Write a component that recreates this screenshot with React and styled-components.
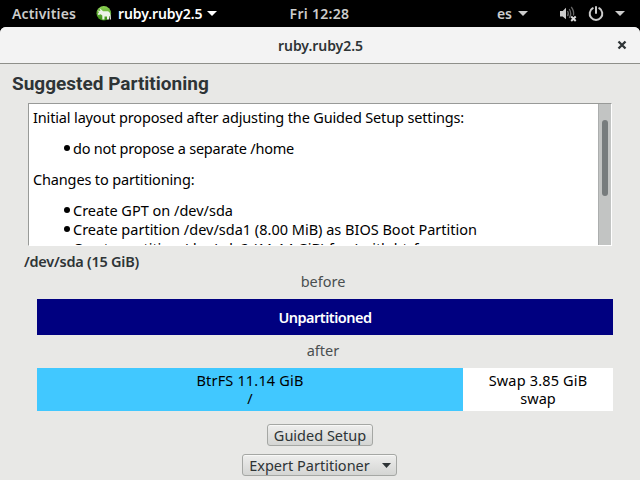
import React from "react";
import styled, { createGlobalStyle } from "styled-components";

const GlobalStyle = createGlobalStyle`
  * { box-sizing: border-box; }
  body { margin: 0; background: #000; overflow: hidden; }
`;

const Desktop = styled.div`
  width: 640px;
  height: 480px;
  display: flex;
  flex-direction: column;
  overflow: hidden;
  background: #000;
  color: #2e3436;
  font: 14.5px/20px "Noto Sans", sans-serif;
  white-space: nowrap;
`;

const Text = styled.span`
  display: block;
  letter-spacing: ${(p) => p.$track || 0}px;
  font-weight: ${(p) => p.$weight || 400};
`;

const TopBar = styled.header`
  height: 27px;
  flex: none;
  display: grid;
  grid-template-columns: 1fr auto 1fr;
  align-items: center;
  padding: 0 15px 0 12px;
  color: #ccc;
  font-size: 14px;
`;

const BarGroup = styled.div`
  display: flex;
  align-items: center;
  justify-content: ${(p) => (p.$end ? "flex-end" : "flex-start")};
`;

const AppMenu = styled.div`
  display: flex;
  align-items: center;
  margin-left: 20px;
  color: #fff;
`;

const AppName = styled(Text)`
  margin: 0 5px 0 6px;
`;

const Clock = styled(Text)`
  margin-left: 2px;
`;

const Language = styled(Text)`
  margin-right: 6px;
`;

const StatusIcons = styled.div`
  display: flex;
  align-items: center;
  margin-left: 31px;
  gap: 11px;
`;

const Window = styled.main`
  flex: 1;
  display: flex;
  flex-direction: column;
  min-height: 0;
  border-radius: 6px 6px 0 0;
  background: #e8e8e6;
  overflow: hidden;
`;

const TitleBar = styled.div`
  height: 37px;
  flex: none;
  display: grid;
  grid-template-columns: 1fr auto 1fr;
  align-items: center;
  background: #f3f3f3;
  border-bottom: 1px solid #8e8f8a;
  font-size: 14px;
`;

const CloseButton = styled.button`
  grid-column: 3;
  justify-self: end;
  display: flex;
  margin-right: 13px;
  padding: 0;
  border: 0;
  background: none;
`;

const Title = styled(Text)`
  grid-column: 2;
  padding: 1px 0 0 1px;
`;

const Heading = styled.h1`
  margin: 9px 0 0 12px;
  height: 30px;
  font: 700 19px/22px Roboto, sans-serif;
`;

const Summary = styled.section`
  display: flex;
  flex: none;
  width: 584px;
  height: 143px;
  margin-left: 28px;
  border: 1px solid #fff;
  border-top-color: #989a98;
  border-left-color: #989a98;
  background: #fff;
  color: #000;
  overflow: hidden;
`;

const SummaryText = styled.div`
  flex: 1;
  min-width: 0;
  padding: 4px 4px 0;
  line-height: 19px;
`;

const List = styled.ul`
  margin: 12px 0;
  padding: 0 0 0 31px;
  list-style: none;
`;

const Item = styled.li`
  display: flex;
  align-items: center;
  gap: 3px;
  &::before {
    content: "";
    width: 6px;
    height: 6px;
    border-radius: 3px;
    background: #000;
    margin-bottom: 1px;
  }
`;

const ScrollTrack = styled.div`
  width: 13px;
  padding: 16px 3px 0;
  border-left: 1px solid #acaeae;
  background: #c2c4c3;
`;

const ScrollThumb = styled.div`
  width: 6px;
  height: 76px;
  border-radius: 3px;
  background: #777c7d;
`;

const DeviceName = styled(Text)`
  margin: 5px 0 0 24px;
`;

const Disk = styled.div`
  display: flex;
  flex-direction: column;
  width: 576px;
  margin-left: 37px;
`;

const StateLabel = styled.div`
  height: ${(p) => p.$height}px;
  padding-top: ${(p) => p.$top}px;
  display: flex;
  justify-content: center;
  padding-right: 4px;
  color: #4a4f50;
`;

const DiskBar = styled.div`
  display: flex;
  height: ${(p) => p.$height}px;
`;

const Partition = styled.div`
  width: ${(p) => p.$width}px;
  padding-bottom: 1px;
  display: flex;
  flex-direction: column;
  align-items: center;
  justify-content: center;
  line-height: 18px;
  background: ${(p) => p.$fill};
  color: ${(p) => p.$color || "#000"};
`;

const Actions = styled.div`
  display: flex;
  flex-direction: column;
  align-items: center;
  gap: 8px;
  padding-top: 13px;
`;

const Button = styled.button`
  display: flex;
  align-items: center;
  justify-content: center;
  gap: 12px;
  width: ${(p) => p.$width}px;
  height: 22px;
  padding: 0 0 0 ${(p) => p.$inset || 0}px;
  border: 1px solid #a5a7a4;
  border-radius: 3px;
  background: linear-gradient(#eeeeed, #d4d5d3);
  box-shadow: inset 0 1px #f8f8f7;
  color: #2e3436;
  font: inherit;
`;

const MenuButton = styled(Button)`
  margin-right: 1px;
`;

const Caret = ({ color = "currentColor", width = 10, height = 5 }) => (
  <svg width={width} height={height} viewBox="0 0 10 5" preserveAspectRatio="none">
    <path d="M0 0H10L5 5Z" fill={color} />
  </svg>
);

const YastIcon = () => (
  <svg width="16" height="16" viewBox="0 0 16 16">
    <defs>
      <linearGradient id="leaf" x2="0" y2="1">
        <stop stopColor="#8ed355" />
        <stop offset="1" stopColor="#368b12" />
      </linearGradient>
    </defs>
    <circle cx="7.8" cy="7.3" r="7.3" fill="url(#leaf)" />
    <path d="M1 3.2L3 5.3L4.5 4.5L3.5 2L6 4.2L7 5.3H12Q14.8 5.8 15 13.5H13.7V10.2L13 10V13.5H11V10.5H8.5V13.5H6.3V9.5L4.7 8.2L2.5 9L1.6 8L3 6.5Z" fill="#eef3e9" />
  </svg>
);

const MutedIcon = () => (
  <svg width="18" height="16" viewBox="0 0 18 16">
    <path d="M1 5H3.7L7 1.7V13.3L3.7 10.5H1Z" fill="#ccc" />
    <g fill="none" stroke="#666" strokeWidth="1.3">
      <path d="M8.5 5Q10.2 7.5 8.5 10.2" />
      <path d="M10.3 3Q13.2 7.5 10.3 12" />
      <path d="M12.2 1Q15.2 4.5 14.5 9.5" />
    </g>
    <path d="M12.2 10.5L16.7 15M16.7 10.5L12.2 15" stroke="#ddd" strokeWidth="1.9" />
  </svg>
);

const PowerIcon = () => (
  <svg width="16" height="16" viewBox="0 0 16 16" fill="none" stroke="#ccc" strokeWidth="2" strokeLinecap="round">
    <path d="M4.8 2.2A6.3 6.3 0 1 0 11.2 2.2M8 1V7" />
  </svg>
);

export default function App() {
  return (
    <Desktop>
      <GlobalStyle />
      <TopBar>
        <BarGroup>
          <Text $weight={600} $track={0.16}>Activities</Text>
          <AppMenu>
            <YastIcon />
            <AppName $weight={600} $track={-0.1}>ruby.ruby2.5</AppName>
            <Caret />
          </AppMenu>
        </BarGroup>
        <Clock $weight={600} $track={0.3}>Fri 12:28</Clock>
        <BarGroup $end>
          <Language $weight={600}>es</Language>
          <Caret />
          <StatusIcons>
            <MutedIcon />
            <PowerIcon />
            <Caret />
          </StatusIcons>
        </BarGroup>
      </TopBar>
      <Window>
        <TitleBar>
          <Title $weight={600} $track={-0.05}>ruby.ruby2.5</Title>
          <CloseButton aria-label="Close">
            <svg width="10" height="10" viewBox="0 0 10 10">
              <path d="M1.5 1.5L8.5 8.5M8.5 1.5L1.5 8.5" stroke="#2e3436" strokeWidth="2.3" />
            </svg>
          </CloseButton>
        </TitleBar>
        <Heading>Suggested Partitioning</Heading>
        <Summary>
          <SummaryText>
            <Text $track={-0.15}>Initial layout proposed after adjusting the Guided Setup settings:</Text>
            <List>
              <Item><Text $track={-0.23}>do not propose a separate /home</Text></Item>
            </List>
            <Text $track={-0.15}>Changes to partitioning:</Text>
            <List>
              <Item><Text>Create GPT on /dev/sda</Text></Item>
              <Item><Text>Create partition /dev/sda1 (8.00 MiB) as BIOS Boot Partition</Text></Item>
              <Item><Text $track={-0.08}>Create partition /dev/sda2 (11.14 GiB) for / with btrfs</Text></Item>
            </List>
          </SummaryText>
          <ScrollTrack><ScrollThumb /></ScrollTrack>
        </Summary>
        <DeviceName $weight={600} $track={-0.25}>/dev/sda (15 GiB)</DeviceName>
        <Disk>
          <StateLabel $height={28} $top={0}><Text>before</Text></StateLabel>
          <DiskBar $height={36}>
            <Partition $width={576} $fill="#000080" $color="#fff">
              <Text $weight={600} $track={-0.5}>Unpartitioned</Text>
            </Partition>
          </DiskBar>
          <StateLabel $height={33} $top={5}><Text>after</Text></StateLabel>
          <DiskBar $height={43}>
            <Partition $width={426} $fill="#41c8ff">
              <Text $track={0.17}>BtrFS 11.14 GiB</Text>
              <Text>/</Text>
            </Partition>
            <Partition $width={150} $fill="#fff">
              <Text $track={0.17}>Swap 3.85 GiB</Text>
              <Text>swap</Text>
            </Partition>
          </DiskBar>
        </Disk>
        <Actions>
          <Button $width={106}><Text>Guided Setup</Text></Button>
          <MenuButton $width={155} $inset={1}><Text>Expert Partitioner</Text><Caret width={9} /></MenuButton>
        </Actions>
      </Window>
    </Desktop>
  );
}
